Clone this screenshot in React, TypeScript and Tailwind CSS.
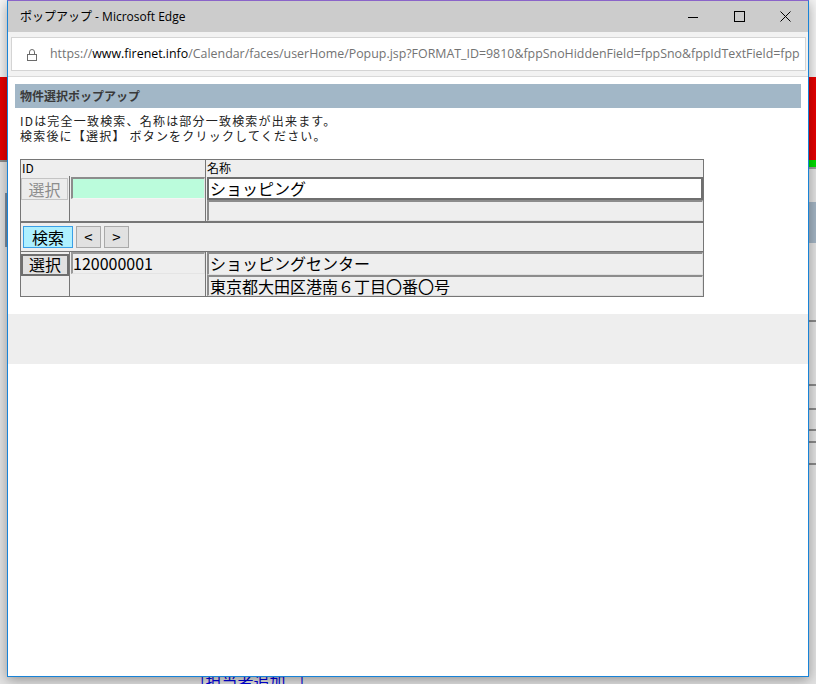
import React from 'react';

function LockIcon() {
  return (
    <svg className="shrink-0" width="12" height="13" viewBox="0 0 12 13" fill="none" stroke="#6b6b6b" strokeWidth="1">
      <path d="M3.5 6V4a2.5 2.5 0 0 1 5 0v2" />
      <rect x="1.5" y="6.5" width="9" height="6" />
    </svg>
  );
}

function WindowControls() {
  return (
    <div className="flex h-full">
      <div className="w-[46px] h-full flex items-center justify-center">
        <svg width="10" height="10" viewBox="0 0 10 10" stroke="#000" strokeWidth="1">
          <path d="M0 5.5h10" />
        </svg>
      </div>
      <div className="w-[46px] h-full flex items-center justify-center">
        <svg width="11" height="11" viewBox="0 0 11 11" fill="none" stroke="#000" strokeWidth="1">
          <rect x="0.5" y="0.5" width="10" height="10" />
        </svg>
      </div>
      <div className="w-[46px] h-full flex items-center justify-center">
        <svg width="11" height="11" viewBox="0 0 11 11" stroke="#000" strokeWidth="1">
          <path d="M0.5 0.5l10 10M10.5 0.5l-10 10" />
        </svg>
      </div>
    </div>
  );
}

export default function App() {
  return (
    <div className="relative w-[816px] h-[684px] overflow-hidden bg-[#e3e3e3] font-['Noto_Sans_CJK_JP',sans-serif]">
      {/* page behind the popup */}
      <div className="absolute inset-x-0 top-0 h-[77px] bg-[#f4f4f4]" />
      <div className="absolute inset-x-0 top-[77px] h-[83px] bg-[#e60000]" />
      <div className="absolute left-0 top-[160px] w-[8px] h-[2px] bg-[#8c8c8c]" />
      <div className="absolute right-0 top-[160px] w-[8px] h-[7px] bg-[#00dd00]" />
      <div className="absolute right-0 top-[167px] w-[8px] h-[2px] bg-[#9a9a9a]" />
      <div className="absolute left-[5px] top-[193px] w-[3px] h-[54px] bg-[#7f8fa0]" />
      <div className="absolute right-0 top-[202px] w-[8px] h-[41px] bg-[#a3b4c3]" />
      <div className="absolute right-0 top-[320px] w-[8px] h-[2px] bg-[#8a8a8a]" />
      <div className="absolute right-0 top-[384px] w-[8px] h-[2px] bg-[#8a8a8a]" />
      <div className="absolute right-0 top-[408px] w-[8px] h-[2px] bg-[#8a8a8a]" />
      <div className="absolute right-0 top-[429px] w-[8px] h-[2px] bg-[#8a8a8a]" />
      <div className="absolute right-0 top-[441px] w-[8px] h-[2px] bg-[#8a8a8a]" />
      <div className="absolute right-0 top-[463px] w-[8px] h-[2px] bg-[#8a8a8a]" />
      <span className="absolute left-[200px] top-[671px] text-[16px] leading-[20px] text-[#0000dd] whitespace-nowrap">
        [担当者追加...]
      </span>

      {/* popup window */}
      <div className="absolute left-[7px] top-0 w-[802px] h-[677px] flex flex-col bg-white border border-[#1883d7] border-t-[#8a64c9] shadow-[0_3px_12px_rgba(0,0,0,0.35)]">
        {/* Title bar */}
        <div className="h-[31px] bg-[#cccccc] flex items-center justify-between pl-[12px]">
          <span className="font-['Open_Sans','Noto_Sans_CJK_JP',sans-serif] text-[12px] text-black leading-[16px]">
            ポップアップ - Microsoft Edge
          </span>
          <WindowControls />
        </div>

        {/* Address bar */}
        <div className="h-[45px] bg-[#f2f2f2] border-b border-[#d9d9d9] pt-[5px] pl-[3px] pr-[2px]">
          <div className="h-[34px] bg-white border border-[#d4d4d4] flex items-center pl-[14px] overflow-hidden">
            <LockIcon />
            <span className="ml-[12px] font-['Open_Sans',sans-serif] text-[12.4px] leading-[18px] text-[#737373] whitespace-nowrap">
              https://<span className="text-black">www.firenet.info</span>/Calendar/faces/userHome/Popup.jsp?FORMAT_ID=9810&amp;fppSnoHiddenField=fppSno&amp;fppIdTextField=fpp
            </span>
          </div>
        </div>

        {/* Page content */}
        <div className="flex-1 flex flex-col">
          <div className="mx-[7px] mt-[7px] h-[24px] bg-[#a2b7c7] pl-[5px] text-[12px] leading-[24px] font-bold text-[#3a3a3a]">
            物件選択ポップアップ
          </div>

          <div className="ml-[12px] mt-[5px] text-[12px] leading-[15px] tracking-[1.2px] text-[#222222]">
            <div>IDは完全一致検索、名称は部分一致検索が出来ます。</div>
            <div>検索後に【選択】 ボタンをクリックしてください。</div>
          </div>

          {/* Search form */}
          <div className="ml-[12px] mt-[16px] w-[684px] border border-[#767676] bg-[#eeeeee] text-black">
            <div className="flex h-[16px] text-[12px] leading-[16px]">
              <div className="w-[185px] border-r border-[#767676] pl-[1px]">ID</div>
              <div className="flex-1 pl-[1px]">名称</div>
            </div>

            <div className="flex h-[45px]">
              <div className="w-[49px] border-r border-[#767676] pt-[1px]">
                <button
                  disabled
                  className="w-[47px] h-[22px] bg-[#ececec] border border-[#c4c4c4] text-[16px] leading-[18px] text-[#8d8d8d]"
                >
                  選択
                </button>
              </div>
              <div className="w-[136px] border-r border-[#767676] pt-[1px] pl-[1px]">
                <div className="w-[134px] h-[22px] bg-[#bbfcdc] border-t-2 border-l-2 border-[#8c8c8c] border-r border-b border-r-[#e4e4e4] border-b-[#f4f4f4]" />
              </div>
              <div className="flex-1 flex flex-col pt-[1px] pl-[1px]">
                <div className="h-[23px] bg-white border-2 border-[#6f6f6f] pl-[1px] text-[16px] leading-[19px]">
                  ショッピング
                </div>
                <div className="h-[21px] bg-[#eeeeee] border-t-2 border-l-2 border-[#8c8c8c] border-r border-b border-r-[#e0e0e0] border-b-[#e0e0e0]" />
              </div>
            </div>

            <div className="h-[30px] border-t-2 border-[#767676] flex items-start gap-[3px] pt-[3px] pl-[2px]">
              <button className="w-[50px] h-[22px] bg-[#aef0ff] border border-[#3a9fe6] text-[16px] leading-[18px]">
                検索
              </button>
              <button className="w-[25px] h-[22px] bg-[#e1e1e1] border border-[#a9a9a9] text-[15px] leading-[18px]">
                &lt;
              </button>
              <button className="w-[25px] h-[22px] bg-[#e1e1e1] border border-[#a9a9a9] text-[15px] leading-[18px]">
                &gt;
              </button>
            </div>

            <div className="flex h-[45px] border-t border-[#767676]">
              <div className="w-[49px] border-r border-[#767676]">
                <button className="w-[48px] h-[22px] bg-[#e1e1e1] border-2 border-[#6f6f6f] text-[16px] leading-[17px]">
                  選択
                </button>
              </div>
              <div className="w-[136px] border-r border-[#767676] pl-[1px]">
                <div className="w-[134px] h-[22px] bg-[#eeeeee] border-t-2 border-l-2 border-[#9a9a9a] border-r border-b border-r-[#e4e4e4] border-b-[#e4e4e4] text-[16px] leading-[18px]">
                  120000001
                </div>
              </div>
              <div className="flex-1 flex flex-col pl-[1px]">
                <div className="h-[23px] bg-[#eeeeee] border-t-2 border-l-2 border-[#8c8c8c] border-r border-b border-r-[#e0e0e0] border-b-[#e0e0e0] pl-[1px] text-[16px] leading-[19px]">
                  ショッピングセンター
                </div>
                <div className="h-[21px] bg-[#eeeeee] border-t-2 border-l-2 border-[#8c8c8c] border-r border-b border-r-[#e0e0e0] border-b-[#e0e0e0] pl-[1px] text-[16px] leading-[18px]">
                  東京都大田区港南６丁目〇番〇号
                </div>
              </div>
            </div>
          </div>

          <div className="mt-[17px] h-[50px] bg-[#eeeeee]" />
        </div>
      </div>
    </div>
  );
}
